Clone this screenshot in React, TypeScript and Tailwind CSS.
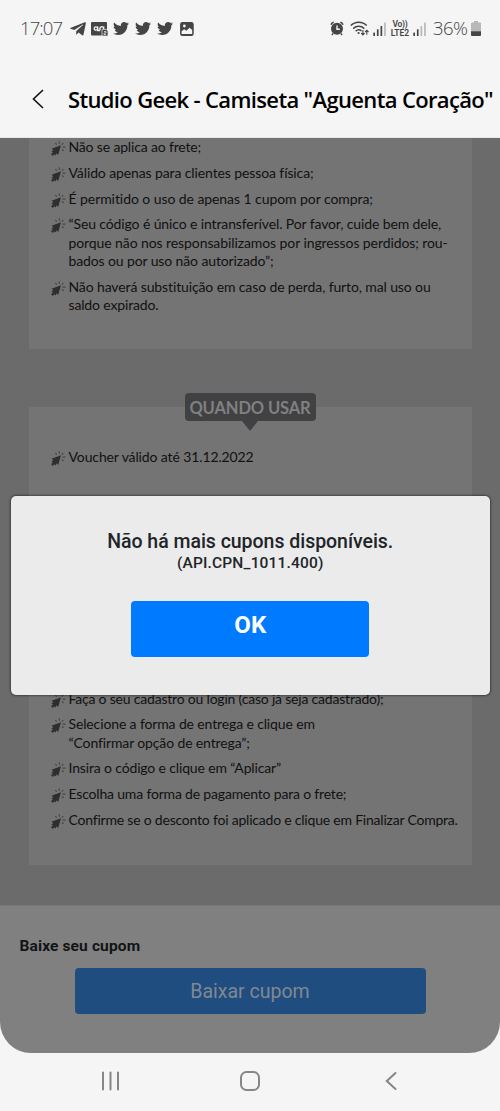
import { FaTelegramPlane, FaTwitter } from 'react-icons/fa'
import { clsx } from 'clsx'

type Line = { text: string; tracking: string }

const rules: Line[][] = [
  [{ text: 'Não se aplica ao frete;', tracking: 'tracking-[-0.16px]' }],
  [{ text: 'Válido apenas para clientes pessoa física;', tracking: 'tracking-[-0.11px]' }],
  [{ text: 'É permitido o uso de apenas 1 cupom por compra;', tracking: 'tracking-[-0.07px]' }],
  [
    { text: '“Seu código é único e intransferível. Por favor, cuide bem dele,', tracking: 'tracking-[-0.12px]' },
    { text: 'porque não nos responsabilizamos por ingressos perdidos; rou-', tracking: 'tracking-[-0.09px]' },
    { text: 'bados ou por uso não autorizado”;', tracking: 'tracking-[-0.12px]' },
  ],
  [
    { text: 'Não haverá substituição em caso de perda, furto, mal uso ou', tracking: 'tracking-[-0.12px]' },
    { text: 'saldo expirado.', tracking: 'tracking-[-0.15px]' },
  ],
]

const when: Line[][] = [[{ text: 'Voucher válido até 31.12.2022', tracking: 'tracking-[-0.12px]' }]]

const steps: Line[][] = [
  [{ text: 'Faça o seu cadastro ou login (caso já seja cadastrado);', tracking: 'tracking-[-0.2px]' }],
  [
    { text: 'Selecione a forma de entrega e clique em', tracking: 'tracking-[-0.13px]' },
    { text: '“Confirmar opção de entrega”;', tracking: 'tracking-[-0.13px]' },
  ],
  [{ text: 'Insira o código e clique em “Aplicar”', tracking: 'tracking-[-0.15px]' }],
  [{ text: 'Escolha uma forma de pagamento para o frete;', tracking: 'tracking-[-0.18px]' }],
  [{ text: 'Confirme se o desconto foi aplicado e clique em Finalizar Compra.', tracking: 'tracking-[-0.21px]' }],
]

function ClickIcon() {
  return (
    <svg viewBox="0 0 16 16" className="mt-[3px] h-4 w-4 shrink-0">
      <path d="M11 4.3 8.2 13.9 6.6 12.2 5.6 14.6 4.6 13.2 2.4 15.2 2.3 13.8 .7 13.6 3 11.2 1.4 10.4 3.4 9.3 1.5 7.8Z" fill="#2e2e30" />
      <path d="M5.4 2 6.7 3.7M9.3 .3V2.7M13.3 2 11.8 3.7M12.6 6.1H15.4M12 8.5 13.7 9.9" stroke="#444446" strokeWidth="1.1" fill="none" />
    </svg>
  )
}

function BulletList({ items }: { items: Line[][] }) {
  return (
    <ul className="flex flex-col gap-[6.8px] pl-[21px]">
      {items.map(lines => (
        <li key={lines[0].text} className="flex gap-[3px]">
          <ClickIcon />
          <div className="whitespace-nowrap font-['Lato',sans-serif] text-[14px] leading-[18.5px] text-[#111]">
            {lines.map(line => (
              <p key={line.text}>
                <span className={clsx(line.tracking)}>{line.text}</span>
              </p>
            ))}
          </div>
        </li>
      ))}
    </ul>
  )
}

function Signal({ faded }: { faded: number }) {
  return (
    <svg viewBox="0 0 14 14" className="h-[14px] w-[14px]">
      {[0, 1, 2, 3].map(i => (
        <rect key={i} x={0.3 + i * 3.6} y={10.5 - i * 3.3} width="1.7" height={3.5 + i * 3.3} rx=".5" fill={i >= faded ? '#b8b8b8' : '#454545'} />
      ))}
    </svg>
  )
}

function StatusBar() {
  return (
    <div className="flex h-[57px] items-center pl-[20px] pr-[19px] text-[#454545]">
      <span className="-mt-[2px] w-[49px] whitespace-nowrap font-['Open_Sans',sans-serif] text-[18.5px] font-light tracking-[-0.9px]">17:07</span>
      <FaTelegramPlane className="h-[18px] w-[18px]" />
      <svg viewBox="0 0 17 14" className="ml-[4px] h-[14px] w-[17px]">
        <rect width="16" height="13.5" rx="1" fill="#454545" />
        <g fill="none" stroke="#f5f5f5" strokeWidth="1.3">
          <circle cx="4.9" cy="6.5" r="1.7" />
          <path d="M6.7 4.5V8.5H9M9 8.4C8 4 12.4 3.8 12.6 6.3M12.7 4.5V7" />
        </g>
        <path d="M11 7.4H15.2L17 9V14H11Z" fill="#454545" stroke="#f5f5f5" strokeWidth=".7" />
        <path d="M13 9.5H15V11H13V12.5H15" fill="none" stroke="#f5f5f5" strokeWidth=".7" />
      </svg>
      <FaTwitter className="ml-[5px] h-[17px] w-4" />
      <FaTwitter className="ml-[6px] h-[17px] w-4" />
      <FaTwitter className="ml-[6px] h-[17px] w-4" />
      <svg viewBox="0 0 14 14" className="ml-[7px] h-[14px] w-[14px]">
        <rect x=".7" y=".7" width="12.4" height="12.6" rx="1.6" fill="#454545" stroke="#454545" strokeWidth="1.2" />
        <circle cx="4.4" cy="4" r="1.4" fill="#f5f5f5" />
        <path d="M1.6 9.3 4.2 7.2 6.3 8.8 9.6 5.8 12.2 8V12.1H1.6Z" fill="#f5f5f5" />
      </svg>

      <svg viewBox="0 0 14 15" className="ml-auto h-[15px] w-[14px]">
        <circle cx="7" cy="7.8" r="6" fill="#454545" />
        <path d="M.9 3.8A4 4 0 0 1 3.7 1.2M13.1 3.8A4 4 0 0 0 10.3 1.2M3 12.5 1.9 14M11 12.5 12.1 14" stroke="#454545" strokeWidth="1.4" fill="none" />
        <path d="M7 4.5V8.2H9.8" stroke="#f5f5f5" strokeWidth="1.4" fill="none" />
      </svg>
      <svg viewBox="0 0 19 15" className="ml-[6px] h-[15px] w-[19px]">
        <path d="M.8 4.6A11 11 0 0 1 16.7 4.6M3.2 7.6A8 8 0 0 1 14.3 7.6M5.6 10.2A4.8 4.8 0 0 1 11.5 9.8" stroke="#454545" strokeWidth="1.5" fill="none" />
        <circle cx="8.6" cy="12" r="1.1" fill="#454545" />
        <path d="M12.9 9V13.7M11.2 12.1 12.9 13.9 14.6 12.1M16.8 13.8V9.4M15.1 11 16.8 9.2 18.5 11" stroke="#454545" strokeWidth="1.1" fill="none" />
      </svg>
      <div className="ml-[4px]">
        <Signal faded={3} />
      </div>
      <div className="ml-[3px] flex w-[20px] flex-col items-center whitespace-nowrap font-['Roboto',sans-serif] text-[8.5px] font-semibold leading-[8.5px]">
        <span className="tracking-[-0.3px]">Vo))</span>
        <span>LTE2</span>
      </div>
      <div className="ml-[3px]">
        <Signal faded={2} />
      </div>
      <span className="-mt-[2px] ml-[6px] w-[38px] whitespace-nowrap font-['Open_Sans',sans-serif] text-[18.5px] font-light tracking-[-0.6px]">36%</span>
      <svg viewBox="0 0 10 15" className="h-[15px] w-[10px]">
        <path d="M3 0H7V1.6H9A1 1 0 0 1 10 2.6V10.5H0V2.6A1 1 0 0 1 1 1.6H3Z" fill="#b8b8b8" />
        <path d="M0 10.3H10V14A1 1 0 0 1 9 15H1A1 1 0 0 1 0 14Z" fill="#454545" />
      </svg>
    </div>
  )
}

function Dialog() {
  return (
    <div className="absolute left-[10.5px] top-[495.5px] flex h-[199.5px] w-[479.5px] flex-col items-center rounded-[5px] bg-[#ebebeb] font-['Roboto',sans-serif] text-[#212529] shadow-[0_0_2px_1px_rgba(0,0,0,0.4)]">
      <h2 className="mt-[34.5px] whitespace-nowrap text-[19.5px] font-medium leading-6 tracking-[-0.03px]">Não há mais cupons disponíveis.</h2>
      <p className="-mt-px whitespace-nowrap text-[15.5px] font-medium leading-5 tracking-[0.17px]">(API.CPN_1011.400)</p>
      <button className="mt-[28px] h-[56px] w-[238px] rounded-[4px] bg-[#007bff] pb-[9px] text-[24px] font-bold text-white">OK</button>
    </div>
  )
}

export default function App() {
  return (
    <div className="relative flex h-[1111px] w-[500px] flex-col overflow-hidden bg-[#f5f5f5]">
      <StatusBar />
      <header className="flex h-[81px] shrink-0 items-center border-b border-[#e8e8e8] pl-[32px] pt-[4px]">
        <svg viewBox="0 0 12 20" className="h-5 w-3">
          <path d="M11 1 1.5 10 11 19" fill="none" stroke="#111" strokeWidth="1.6" />
        </svg>
        <h1 className="ml-[24px] mt-[1px] whitespace-nowrap font-['Open_Sans',sans-serif] text-[22px] font-semibold tracking-[-0.65px] text-black">
          Studio Geek - Camiseta "Aguenta Coração"
        </h1>
      </header>

      <div className="flex h-[915px] shrink-0 flex-col overflow-hidden rounded-b-[31px] bg-[#808080]">
        <main className="flex h-[767px] shrink-0 flex-col bg-[#6b6b6b] px-[28.5px]">
          <section className="h-[211px] shrink-0 bg-[#747474]">
            <BulletList items={rules} />
          </section>

          <section className="mt-[58px] flex h-[121px] shrink-0 flex-col bg-[#747474]">
            <div className="-mt-[14px] flex flex-col items-center">
              <h3 className="flex h-7 w-[131px] items-center justify-center whitespace-nowrap rounded-[4px] bg-[#414143] pt-[2px] font-['Lato',sans-serif] text-[16.5px] font-bold text-[#808080]">
                <span className="tracking-[-0.12px]">QUANDO USAR</span>
              </h3>
              <div className="h-0 w-0 border-x-[8px] border-t-[10px] border-x-transparent border-t-[#414143]" />
            </div>
            <div className="pt-[16.5px]">
              <BulletList items={when} />
            </div>
          </section>

          <section className="mt-[58px] flex h-[279px] shrink-0 flex-col justify-end bg-[#747474] pb-[35.2px]">
            <BulletList items={steps} />
          </section>
        </main>

        <footer className="flex h-[148px] flex-col items-center border-t border-[#777] font-['Roboto',sans-serif]">
          <h4 className="mt-[29px] w-full pl-[19.5px] text-[15.5px] font-bold leading-[22px] text-[#121416]">
            <span className="tracking-[0.13px]">Baixe seu cupom</span>
          </h4>
          <button className="mt-[11px] h-[46px] w-[351px] rounded-[4px] bg-[#204d80] pt-[2px] text-[19.5px] text-[#808890]">
            <span>Baixar cupom</span>
          </button>
        </footer>
      </div>

      <nav className="flex h-[58px] items-center pb-[2px] pl-[101px] pr-[103px]">
        <svg viewBox="0 0 19 20" className="h-5 w-[19px]">
          <path d="M2 1.5V18.5M9.5 1.5V18.5M17 1.5V18.5" stroke="#868686" strokeWidth="2" strokeLinecap="round" />
        </svg>
        <svg viewBox="0 0 20 20" className="ml-[120px] h-5 w-5">
          <rect x="1" y="1" width="18" height="18" rx="5.5" fill="none" stroke="#868686" strokeWidth="2" />
        </svg>
        <svg viewBox="0 0 12 20" className="ml-auto h-5 w-3">
          <path d="M10.5 2 1.8 10 10.5 18" fill="none" stroke="#868686" strokeWidth="2" strokeLinecap="round" />
        </svg>
      </nav>

      <Dialog />
    </div>
  )
}
